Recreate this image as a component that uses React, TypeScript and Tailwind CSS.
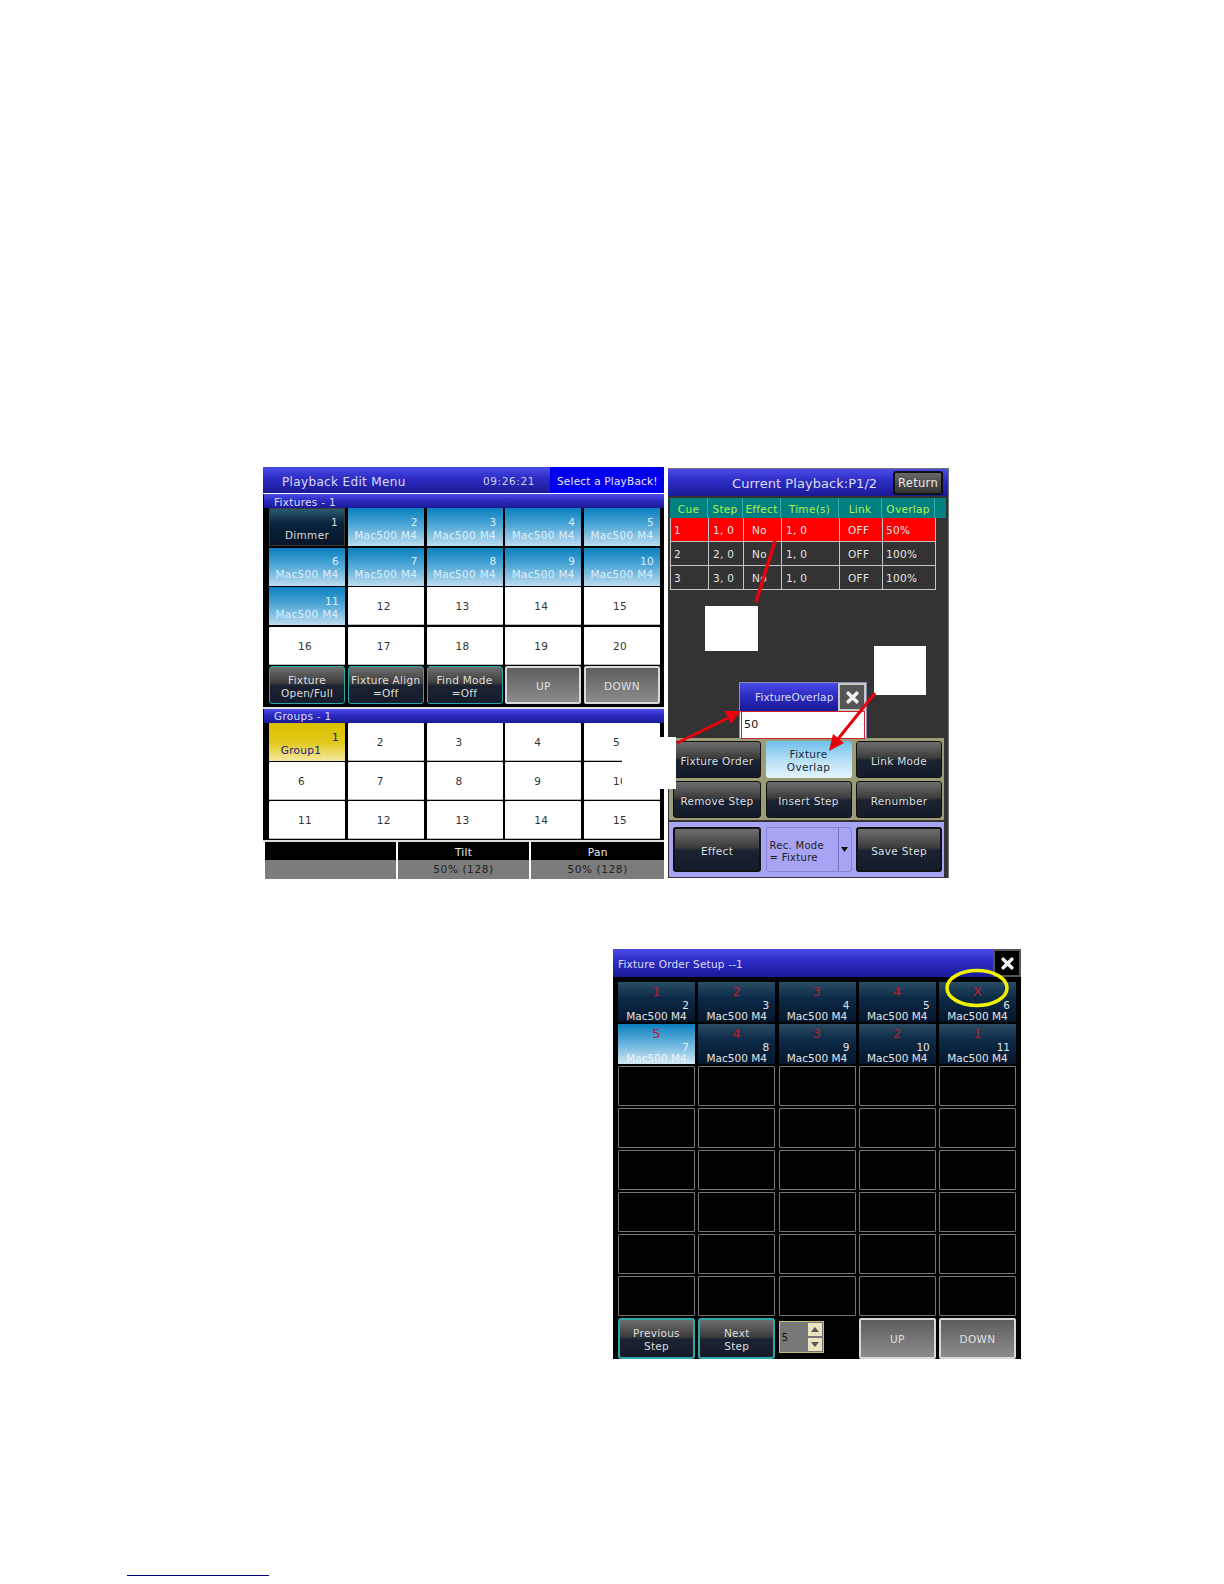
const BLUE_BAR = "bg-[linear-gradient(#4a4ae6,#2c2cc4_45%,#1a1a96)]";
const SOFT_BTN =
  "bg-[linear-gradient(#6e6e6e,#3c3c3c_45%,#1b2332_52%,#141c2c)] text-[#dcdcdc]";
const GREY_BTN = "bg-[linear-gradient(#5e5e5e,#8c8c8c)] text-[#e0e0e0]";

function Tile({ n, name, kind }: { n: number; name: string; kind: "blue" | "dark" | "gold" }) {
  const look =
    kind === "blue"
      ? "bg-[linear-gradient(#0a7fbe,#4ea6d6_45%,#bcdcf0)] text-[#dceefa]"
      : kind === "gold"
        ? "bg-[linear-gradient(#dcc000,#e0c818_50%,#f4e8a0)] text-[#20208c]"
        : "bg-[linear-gradient(#2a5a70,#08243e_40%,#061428)] text-[#dcdcdc] border border-[#3c3c3c]";
  return (
    <div className={`h-full flex flex-col justify-center px-[6px] pt-[3px] leading-[13px] whitespace-nowrap ${look}`}>
      <div className="text-right">{n}</div>
      <div className={kind === "gold" ? "text-center pr-[12px]" : "text-center"}>{name}</div>
    </div>
  );
}

function Plain({ n }: { n: number }) {
  return (
    <div className="h-full bg-white border-b border-[#bbb] rounded-[1px] pt-[3px] pl-[29px] text-[#333] flex items-center">
      {n}
    </div>
  );
}

function Soft({ lines, className = "" }: { lines: string[]; className?: string }) {
  return (
    <div
      className={`h-full rounded-[3px] pt-[3px] flex flex-col items-center justify-center leading-[13px] text-center whitespace-nowrap ${SOFT_BTN} ${className}`}
    >
      {lines.map((l) => (
        <div key={l}>{l}</div>
      ))}
    </div>
  );
}

function Grey({ label }: { label: string }) {
  return (
    <div
      className={`h-full rounded-[2px] pt-[3px] border-2 border-[#d8d8d8] flex items-center justify-center ${GREY_BTN}`}
    >
      {label}
    </div>
  );
}

function CloseX({ size }: { size: number }) {
  return (
    <svg width={size} height={size} viewBox="0 0 12 12">
      <path d="M2 2 L10 10 M10 2 L2 10" stroke="#f0f0f0" strokeWidth="3.2" strokeLinecap="round" />
    </svg>
  );
}

function LeftPanel() {
  const mac = Array.from({ length: 10 }, (_, i) => i + 2);
  return (
    <div className="w-[401px] h-[411px] flex flex-col bg-black">
      <div className={`h-[26px] shrink-0 flex items-center pt-[4px] text-[12px] text-[#dcdcf4] ${BLUE_BAR}`}>
        <span className="ml-[19px] w-[201px] tracking-[0.35px]">Playback Edit Menu</span>
        <span className="w-[67px] text-[10.5px] tracking-[0.6px] text-[#d0d0ec]">09:26:21</span>
        <span className="ml-auto w-[114px] h-[26px] -mt-[4px] bg-[#0000ee] flex items-center pt-[3px] pl-[7px] text-[10.5px] tracking-[0.2px] text-[#e8e8ff]">
          Select a PlayBack!
        </span>
      </div>
      <div className="h-px shrink-0 bg-white" />
      <div className={`h-[14px] shrink-0 ml-px leading-[17px] overflow-hidden pl-[10px] text-[#dcdcf4] ${BLUE_BAR}`}>Fixtures - 1</div>
      <div className="h-[198px] shrink-0 pl-[6px] grid grid-cols-[repeat(5,76px)] grid-rows-[repeat(5,38px)] gap-x-[2.75px] gap-y-[1.5px]">
        <Tile n={1} name="Dimmer" kind="dark" />
        {mac.map((n) => (
          <Tile key={n} n={n} name="Mac500 M4" kind="blue" />
        ))}
        {[12, 13, 14, 15, 16, 17, 18, 19, 20].map((n) => (
          <Plain key={n} n={n} />
        ))}
        <Soft lines={["Fixture", "Open/Full"]} className="border border-[#2aa8a8]" />
        <Soft lines={["Fixture Align", "=Off"]} className="border border-[#2aa8a8]" />
        <Soft lines={["Find Mode", "=Off"]} className="border border-[#2aa8a8]" />
        <Grey label="UP" />
        <Grey label="DOWN" />
      </div>
      <div className="h-[2px] shrink-0 bg-[#ddd] mt-px" />
      <div className={`h-[14px] shrink-0 ml-px leading-[15px] overflow-hidden pl-[10px] text-[#dcdcf4] ${BLUE_BAR}`}>Groups - 1</div>
      <div className="h-[117px] shrink-0 pl-[6px] grid grid-cols-[repeat(5,76px)] grid-rows-[repeat(3,38px)] gap-x-[2.75px] gap-y-px">
        <Tile n={1} name="Group1" kind="gold" />
        {[2, 3, 4, 5, 6, 7, 8, 9, 10, 11, 12, 13, 14, 15].map((n) => (
          <Plain key={n} n={n} />
        ))}
      </div>
      <div className="h-[2px] shrink-0 bg-[#ddd]" />
      <div className="flex-1 flex gap-[2px] bg-white pl-[2px]">
        {[
          ["", "", "w-[131px]"],
          ["Tilt", "50% (128)", "w-[132px]"],
          ["Pan", "50% (128)", "w-[133px]"],
        ].map(([a, b, w]) => (
          <div key={a} className={`${w} flex flex-col text-center`}>
            <div className="h-[18px] bg-black text-[#eee] leading-[21px]">{a}</div>
            <div className="flex-1 bg-[#7c7c7c] text-[#222] leading-[19px] tracking-[0.6px]">{b}</div>
          </div>
        ))}
      </div>
    </div>
  );
}

const COLS = "grid grid-cols-[38px_35px_38px_58px_43px_53px]";

function CueRow({ cells, active }: { cells: string[]; active?: boolean }) {
  const pads = ["pl-[3px]", "pl-[4px]", "pl-[8px]", "pl-[4px]", "pl-[8px]", "pl-[3px]"];
  return (
    <div className={`${COLS} h-[24px] ${active ? "bg-[#ff0000]" : ""} text-[#e4e4e4] border-b border-[#c4c4c4]`}>
      {cells.map((c, i) => (
        <div key={i} className={`${pads[i]} leading-[24px] border-r border-[#c4c4c4]`}>
          {c}
        </div>
      ))}
    </div>
  );
}

function RightPanel() {
  return (
    <div className="relative w-[281px] h-[410px] mt-px ml-[4px] flex flex-col bg-[#333] border-t border-r border-[#777]">
      <div className={`h-[27px] shrink-0 flex items-center text-[13px] text-[#dcdcf4] ${BLUE_BAR}`}>
        <span className="ml-[64px] pt-[2px] tracking-[0.05px]">Current Playback:P1/2</span>
        <span className="ml-auto mr-[5px] w-[50px] h-[24px] rounded-[3px] border-2 border-[#111] bg-[linear-gradient(#666,#333)] pt-[2px] text-[#e8e8e8] text-[11.5px] flex items-center justify-center">
          Return
        </span>
      </div>
      <div className="ml-[2px] mt-[2px] w-[276px] h-[20px] shrink-0 bg-[#008080] text-[#b4f04a]">
        <div className={`${COLS} h-full w-[265px] text-center leading-[22px]`}>
          {["Cue", "Step", "Effect", "Time(s)", "Link", "Overlap"].map((h) => (
            <div key={h} className="border-r border-[#3aa8a8]">
              {h}
            </div>
          ))}
        </div>
      </div>
      <div className="ml-[2px] w-[266px] border-l border-[#c4c4c4]">
        <CueRow active cells={["1", "1, 0", "No", "1, 0", "OFF", "50%"]} />
        <CueRow cells={["2", "2, 0", "No", "1, 0", "OFF", "100%"]} />
        <CueRow cells={["3", "3, 0", "No", "1, 0", "OFF", "100%"]} />
      </div>

      <div className="absolute left-[71px] top-[213px] w-[128px] h-[57px] bg-white border border-[#8a8ab0] flex flex-col">
        <div className={`h-[28px] shrink-0 flex items-center text-[#dcdcf4] ${BLUE_BAR}`}>
          <span className="ml-[15px] pt-[2px] tracking-[0.1px]">FixtureOverlap</span>
          <span className="ml-auto w-[28px] h-full bg-[#555] border-2 border-[#c8c8c8] flex items-center justify-center">
            <CloseX size={13} />
          </span>
        </div>
        <div className="mx-px mb-px flex-1 bg-white border border-[#d02030] text-[#111] pl-[2px] text-[11px] leading-[26px]">
          50
        </div>
      </div>

      <div className="mt-auto ml-[1px] w-[275px] h-[82px] shrink-0 bg-[#9c9c76] grid grid-cols-[88px_86px_86px] grid-rows-[37px_37px] gap-x-[4.5px] gap-y-[3px] pl-[4px] pt-[3px]">
        <Soft lines={["Fixture Order"]} className="border border-[#111]" />
        <div className="h-full rounded-[3px] pt-[2px] bg-[linear-gradient(#6ec0ec,#c0e4f6_60%,#e4f4fc)] text-[#1a2a3a] flex flex-col items-center justify-center leading-[13px]">
          <div>Fixture</div>
          <div>Overlap</div>
        </div>
        <Soft lines={["Link Mode"]} className="border border-[#111]" />
        <Soft lines={["Remove Step"]} className="border border-[#111]" />
        <Soft lines={["Insert Step"]} className="border border-[#111]" />
        <Soft lines={["Renumber"]} className="border border-[#111]" />
      </div>
      <div className="mt-[2px] ml-[1px] mb-px w-[275px] h-[55px] shrink-0 bg-[#a8a4f4] grid grid-cols-[88px_86px_86px] gap-x-[4.5px] pl-[4px] py-[5px]">
        <Soft lines={["Effect"]} className="border-2 border-[#111]" />
        <div className="flex rounded-[3px] border border-[#8884d4] text-[#222] text-[10px] leading-[12px]">
          <div className="flex-1 flex flex-col justify-center pl-[3px] pt-[4px] whitespace-nowrap">
            <div>Rec. Mode</div>
            <div>= Fixture</div>
          </div>
          <div className="w-[13px] border-l border-[#7874c8] flex items-center justify-center">
            <svg width="7" height="5" viewBox="0 0 7 5">
              <path d="M0 0 H7 L3.5 5 Z" fill="#111" />
            </svg>
          </div>
        </div>
        <Soft lines={["Save Step"]} className="border-2 border-[#111]" />
      </div>
    </div>
  );
}

function OrderTile({ red, n, active }: { red: string; n: number; active?: boolean }) {
  return (
    <div
      className={`h-full flex flex-col pt-[2px] px-[6px] leading-[13px] tracking-[0px] whitespace-nowrap ${
        active
          ? "bg-[linear-gradient(#0a7fbe,#6ab4de_50%,#d4e8f4)] text-[#eaf4fa]"
          : "bg-[linear-gradient(#2a4c64,#0c2a48_40%,#06162c)] text-[#e4e4e4]"
      }`}
    >
      <div className="text-center text-[13px] text-[#b4202c] leading-[15px]">{red}</div>
      <div className="text-right">{n}</div>
      <div className="text-center -mt-[2px]">Mac500 M4</div>
    </div>
  );
}

function OrderDialog() {
  const tiles: [string, number][] = [
    ["1", 2],
    ["2", 3],
    ["3", 4],
    ["4", 5],
    ["X", 6],
    ["5", 7],
    ["4", 8],
    ["3", 9],
    ["2", 10],
    ["1", 11],
  ];
  return (
    <div className="mt-[71px] ml-[613px] w-[408px] h-[410px] bg-black flex flex-col">
      <div className={`h-[28px] shrink-0 flex items-center text-[#dcdcf4] ${BLUE_BAR}`}>
        <span className="ml-[5px] pt-[3px] tracking-[0.2px]">Fixture Order Setup --1</span>
        <span className="ml-auto w-[28px] h-full bg-black border-2 border-[#555] flex items-center justify-center">
          <CloseX size={13} />
        </span>
      </div>
      <div className="pl-[5px] pt-[5px] grid grid-cols-[repeat(5,77px)] grid-rows-[repeat(8,40px)_41px] gap-x-[3.25px] gap-y-[2px]">
        {tiles.map(([r, n]) => (
          <OrderTile key={n} red={r} n={n} active={n === 7} />
        ))}
        {Array.from({ length: 30 }, (_, i) => (
          <div key={i} className="border border-[#777] rounded-[1px]" />
        ))}
        <Soft lines={["Previous", "Step"]} className="border-2 border-[#2aa8a8]" />
        <Soft lines={["Next", "Step"]} className="border-2 border-[#2aa8a8]" />
        <div className="w-[45px] h-[32px] mt-[3px] border border-[#c0c070] bg-[#777] flex items-center">
          <span className="flex-1 pl-[2px] pt-[2px] text-[#111]">5</span>
          <div className="w-[14px] mr-px flex flex-col gap-[2px]">
            <span className="h-[13px] bg-[#e8e4c0] flex items-center justify-center">
              <svg width="8" height="5" viewBox="0 0 8 5">
                <path d="M0 5 H8 L4 0 Z" fill="#555" />
              </svg>
            </span>
            <span className="h-[13px] bg-[#e8e4c0] flex items-center justify-center">
              <svg width="8" height="5" viewBox="0 0 8 5">
                <path d="M0 0 H8 L4 5 Z" fill="#555" />
              </svg>
            </span>
          </div>
        </div>
        <Grey label="UP" />
        <Grey label="DOWN" />
      </div>
    </div>
  );
}

// red callouts, blanked out labels and the yellow ring drawn over the screenshots
function Annotations() {
  return (
    <>
      <div className="absolute left-[705px] top-[606px] w-[53px] h-[45px] bg-white" />
      <div className="absolute left-[874px] top-[646px] w-[52px] h-[49px] bg-white" />
      <div className="absolute left-[622px] top-[737px] w-[54px] h-[52px] bg-white" />
      <svg className="absolute left-0 top-0 pointer-events-none" width="1224" height="1584">
        <path d="M775 541 L756 602" stroke="#e8000c" strokeWidth="3.5" />
        <path d="M677 743 L728 718" stroke="#e8000c" strokeWidth="3" />
        <path d="M741 711 L724 711 L731 724 Z" fill="#e8000c" />
        <path d="M875 693 L838 739" stroke="#e8000c" strokeWidth="3" />
        <path d="M829 751 L833 734 L844 743 Z" fill="#e8000c" />
        <ellipse cx="977" cy="988" rx="30" ry="17.5" fill="none" stroke="#f0f000" strokeWidth="3.5" />
      </svg>
    </>
  );
}

export default function App() {
  return (
    <div className="relative w-[1224px] h-[1584px] bg-white overflow-hidden pt-[467px] text-[10.5px] tracking-[0.3px] [font-family:'DejaVu_Sans',sans-serif]">
      <div className="flex ml-[263px]">
        <LeftPanel />
        <RightPanel />
      </div>
      <OrderDialog />
      <div className="mt-[216px] ml-[127px] w-[142px] h-px bg-[#000080]" />
      <Annotations />
    </div>
  );
}
